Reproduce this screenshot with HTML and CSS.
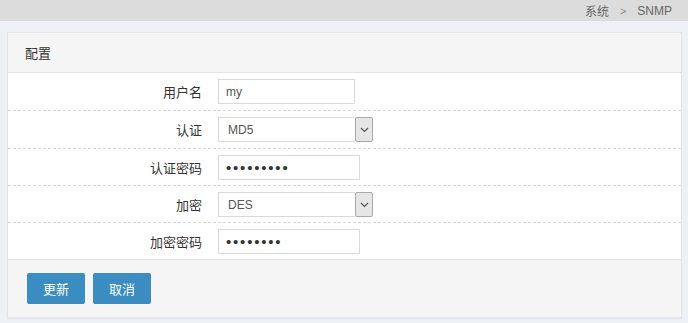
FILE: index.html
```html
<!DOCTYPE html>
<html lang="zh">
<head>
<meta charset="utf-8">
<title>SNMP</title>
<link rel="stylesheet" href="styles.css">
</head>
<body>
<div class="topbar">
  <div class="crumbs"><span>系统</span><span class="sep">&gt;</span><span>SNMP</span></div>
</div>
<div class="panel">
  <div class="panel-head">配置</div>
  <div class="panel-body">
    <div class="row">
      <label class="lbl">用户名</label>
      <div class="ctl"><input class="inp inp-sm" type="text" value="my"></div>
    </div>
    <div class="row">
      <label class="lbl">认证</label>
      <div class="ctl"><div class="sel"><span class="sel-val">MD5</span><span class="sel-btn"><svg width="9" height="6" viewBox="0 0 9 6"><path d="M1 1l3.5 3.5L8 1" fill="none" stroke="#555" stroke-width="1.2"/></svg></span></div></div>
    </div>
    <div class="row tight">
      <label class="lbl">认证密码</label>
      <div class="ctl"><input class="inp pw" type="password" value="123456789"></div>
    </div>
    <div class="row tight">
      <label class="lbl">加密</label>
      <div class="ctl"><div class="sel"><span class="sel-val">DES</span><span class="sel-btn"><svg width="9" height="6" viewBox="0 0 9 6"><path d="M1 1l3.5 3.5L8 1" fill="none" stroke="#555" stroke-width="1.2"/></svg></span></div></div>
    </div>
    <div class="row last">
      <label class="lbl">加密密码</label>
      <div class="ctl"><input class="inp pw" type="password" value="12345678"></div>
    </div>
  </div>
  <div class="panel-foot">
    <button class="btn">更新</button>
    <button class="btn">取消</button>
  </div>
</div>
</body>
</html>
```
FILE: styles.css
```css
html, body {
  margin: 0;
  padding: 0;
}
body {
  background: #edf0f4;
  font-family: "Liberation Sans", Arial, "Noto Sans CJK SC", sans-serif;
  font-size: 12px;
  color: #333;
  height: 323px;
  overflow: hidden;
}
.topbar {
  height: 21px;
  background: #dcdcdc;
  display: flex;
  justify-content: flex-end;
  align-items: center;
  padding-right: 16px;
}
.crumbs {
  color: #666;
  font-size: 12px;
  display: flex;
  gap: 11px;
  align-items: center;
}
.crumbs .sep {
  color: #888;
  font-size: 11px;
}
.panel {
  margin: 11px 6px 0 7px;
  border: 1px solid #e2e4e7;
  background: #f5f5f5;
  box-shadow: 0 1px 1px rgba(0,0,0,0.04);
}
.panel-head {
  height: 39px;
  display: flex;
  align-items: center;
  padding-left: 17px;
  font-size: 13px;
  color: #333;
  border-bottom: 1px solid #e4e4e4;
}
.panel-body {
  background: #fff;
  border-bottom: 1px solid #e4e4e4;
}
.row {
  display: grid;
  grid-template-columns: 194px 1fr;
  column-gap: 16px;
  align-items: center;
  padding: 6px 0 6px;
  border-bottom: 1px dashed #d8d8d8;
}
.row.tight {
  padding-bottom: 5px;
}
.row.last {
  border-bottom: none;
  padding-bottom: 5px;
}
.lbl {
  text-align: right;
  font-size: 13px;
  color: #333;
}
.ctl {
  display: flex;
}
.inp {
  box-sizing: border-box;
  width: 142px;
  height: 25px;
  border: 1px solid #d9d9d9;
  padding: 0 7px;
  font-family: "Liberation Sans", Arial, sans-serif;
  font-size: 12px;
  color: #555;
  background: #fff;
  outline: none;
}
.inp-sm {
  width: 137px;
}
.inp.pw {
  font-size: 15px;
  letter-spacing: 1.8px;
  color: #333;
}
.sel {
  box-sizing: border-box;
  width: 155px;
  height: 25px;
  display: flex;
  align-items: stretch;
}
.sel-val {
  flex: 1;
  border: 1px solid #d9d9d9;
  border-right: none;
  display: flex;
  align-items: center;
  padding-left: 9px;
  font-size: 12px;
  color: #555;
}
.sel-btn {
  width: 16px;
  background: #e6e6e6;
  border: 1px solid #a9a9a9;
  border-radius: 2px;
  display: flex;
  align-items: center;
  justify-content: center;
}
.panel-foot {
  height: 57px;
  display: flex;
  align-items: center;
  gap: 8px;
  padding-left: 19px;
}
.btn {
  width: 58px;
  height: 31px;
  border: none;
  border-radius: 2px;
  background: #3a8cc1;
  color: #fff;
  font-family: "Liberation Sans", Arial, "Noto Sans CJK SC", sans-serif;
  font-size: 13px;
  padding: 0;
}
```
